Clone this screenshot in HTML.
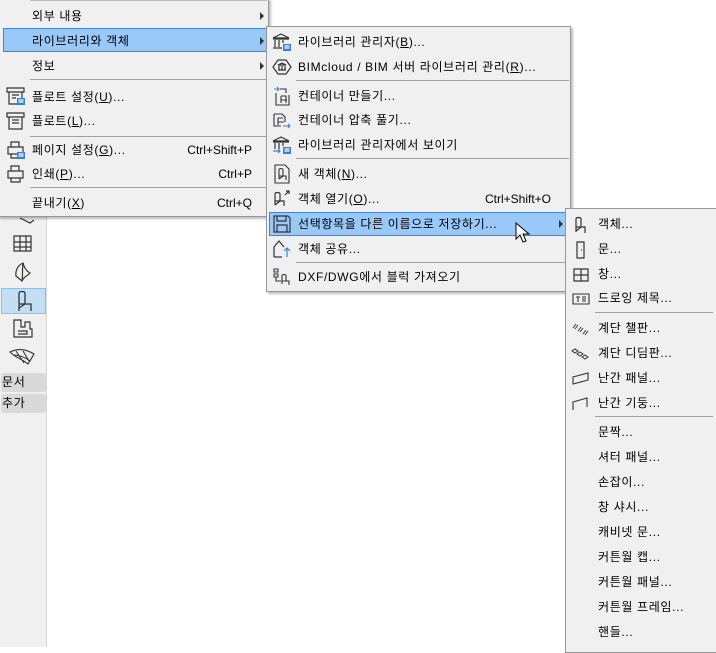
<!DOCTYPE html><html><head><meta charset="utf-8"><style>
*{margin:0;padding:0;box-sizing:border-box}
body{width:716px;height:647px;background:#fff;position:relative;overflow:hidden;font-family:"Liberation Sans","Noto Sans CJK KR",sans-serif;font-size:12px;color:#000}
.m{position:absolute;background:#f0f0f0;border:1px solid #979797;box-shadow:2px 2px 2px rgba(0,0,0,.25)}
.t{position:absolute;white-space:nowrap;line-height:16px;letter-spacing:0.65px}
.r{position:absolute;white-space:nowrap;line-height:16px;text-align:right}
.sep{position:absolute;height:1px;background:#a0a0a0}
.hl{position:absolute;background:#99c9f9;border:1px solid #3f86d2}
.arr{position:absolute;width:0;height:0;border-top:4px solid transparent;border-bottom:4px solid transparent;border-left:4px solid #333}
svg{position:absolute}
u{text-decoration:underline}
</style></head><body>
<!-- left toolbar -->
<div style="position:absolute;left:0;top:0;width:47px;height:647px;background:#f0f0f0;border-right:1px solid #d5d5d5"></div>
<svg style="left:14px;top:210px" width="22" height="16" viewBox="0 0 22 16" fill="none" stroke="#333" stroke-width="1.2"><path d="M6 8l10 5 4-3"/></svg>
<svg style="left:12px;top:234px" width="22" height="20" viewBox="0 0 22 20" fill="none" stroke="#333" stroke-width="1.2"><path d="M2 2h17v15H2z M2 8h17 M2 13h17 M8 2v15 M14 2v15"/></svg>
<svg style="left:13px;top:261px" width="20" height="22" viewBox="0 0 20 22" fill="none" stroke="#333" stroke-width="1.2"><path d="M10 2C5 4 2 10 3 15l6 5c2-5 7-6 8-8-4-2-6-6-7-10z M10 2c-1 6 0 13-1 18"/></svg>
<div style="position:absolute;left:1px;top:288px;width:45px;height:26px;background:#c4def4;border:1px solid #8cc0ee"></div>
<svg style="left:15px;top:289px" width="18" height="24" viewBox="0 0 18 24" fill="none" stroke="#333" stroke-width="1.3"><path d="M4 20V4c0-2 6-2 6 0v11 M4 15h12v7 M10 15l-6 4 M4 15v7"/></svg>
<svg style="left:12px;top:318px" width="22" height="22" viewBox="0 0 22 22" fill="none" stroke="#333" stroke-width="1.2"><path d="M2 2h7v7h4V4h5v7h2v8H2z M6 13h9v3H6"/></svg>
<svg style="left:8px;top:346px" width="30" height="22" viewBox="0 0 30 22" fill="none" stroke="#333" stroke-width="1.1"><path d="M2 6c8-4 16-3 24 2l-6 10C14 13 8 12 2 6z M8 5l8 12 M15 5l6 10 M5 9c7 0 13 3 17 6"/></svg>
<div style="position:absolute;left:1px;top:373px;width:45px;height:19px;background:#d9d9d9;border-radius:3px"></div>
<div class="t" style="left:2px;top:374px">문서</div>
<div style="position:absolute;left:1px;top:394px;width:45px;height:19px;background:#d9d9d9;border-radius:3px"></div>
<div class="t" style="left:2px;top:395px">추가</div>

<!-- menu 1 -->
<div class="m" style="left:-2px;top:-2px;width:271px;height:219px"></div>
<div class="sep" style="left:30px;top:0;width:237px;background:#bbb"></div>
<div class="t" style="left:32px;top:8px">외부 내용</div><div class="arr" style="left:260px;top:12px"></div>
<div class="hl" style="left:3px;top:28px;width:264px;height:24px"></div>
<div class="t" style="left:32px;top:33px">라이브러리와 객체</div><div class="arr" style="left:260px;top:37px"></div>
<div class="t" style="left:32px;top:58px">정보</div><div class="arr" style="left:260px;top:62px"></div>
<div class="sep" style="left:30px;top:79px;width:237px"></div>
<svg style="left:6px;top:86px" width="20" height="20" viewBox="0 0 20 20" fill="none" stroke="#333" stroke-width="1.2"><path d="M1 2h17v4H1z M3 6v12h8 M16 6v6 M6 9h7 M6 12h4"/><rect x="11" y="12" width="8" height="7" fill="#3a7fd5" stroke="none"/><path d="M12.5 14h5M12.5 16h5" stroke="#fff"/></svg>
<div class="t" style="left:32px;top:89px">플로트 설정(<u>U</u>)...</div>
<svg style="left:6px;top:111px" width="20" height="20" viewBox="0 0 20 20" fill="none" stroke="#333" stroke-width="1.2"><path d="M1 2h17v4H1z M3 6v12h13V6 M6 9h7 M6 12h7"/></svg>
<div class="t" style="left:32px;top:113px">플로트(<u>L</u>)...</div>
<div class="sep" style="left:30px;top:136px;width:237px"></div>
<svg style="left:6px;top:140px" width="20" height="20" viewBox="0 0 20 20" fill="none" stroke="#333" stroke-width="1.2"><path d="M5 7V2h8v5 M2 7h15v7H2z M5 14v4h6"/><rect x="11" y="12" width="8" height="7" fill="#3a7fd5" stroke="none"/><path d="M12.5 14h5M12.5 16h5" stroke="#fff"/></svg>
<div class="t" style="left:32px;top:142px">페이지 설정(<u>G</u>)...</div><div class="r" style="right:464px;top:142px">Ctrl+Shift+P</div>
<svg style="left:6px;top:164px" width="20" height="20" viewBox="0 0 20 20" fill="none" stroke="#333" stroke-width="1.2"><path d="M5 7V2h8v5 M2 7h15v7H2z M5 14v4h9v-4"/></svg>
<div class="t" style="left:32px;top:166px">인쇄(<u>P</u>)...</div><div class="r" style="right:464px;top:166px">Ctrl+P</div>
<div class="sep" style="left:30px;top:187px;width:237px"></div>
<div class="t" style="left:32px;top:195px">끝내기(<u>X</u>)</div><div class="r" style="right:464px;top:195px">Ctrl+Q</div>

<!-- menu 2 -->
<div class="m" style="left:266px;top:26px;width:305px;height:266px"></div>
<svg style="left:272px;top:32px" width="20" height="20" viewBox="0 0 20 20" fill="none" stroke="#333" stroke-width="1.2"><path d="M1 6l8-4 8 4z M1 7h16 M3 8v7 M7 8v7 M11 8v3 M1 16h9"/><rect x="11" y="12" width="8" height="7" fill="#3a7fd5" stroke="none"/><path d="M12.5 14h5M12.5 16h5" stroke="#fff"/></svg>
<div class="t" style="left:298px;top:34px">라이브러리 관리자(<u>B</u>)...</div>
<svg style="left:272px;top:57px" width="20" height="20" viewBox="0 0 20 20" fill="none" stroke="#333" stroke-width="1.2"><path d="M6 3h8l5 7-5 7H6l-5-7z M6 8l4-2 4 2z M7 9v4 M10 9v4 M13 9v4 M6 13h8"/></svg>
<div class="t" style="left:298px;top:59px">BIMcloud / BIM 서버 라이브러리 관리(<u>R</u>)...</div>
<div class="sep" style="left:296px;top:80px;width:273px"></div>
<svg style="left:272px;top:86px" width="20" height="20" viewBox="0 0 20 20" fill="none" stroke="#333" stroke-width="1.1"><path d="M2 3h5 M5 1l2 2-2 2" stroke="#3a7fd5"/><path d="M8 3h6v4 M4 7v12h13V9 M9 10v7 M9 10h5v7 M9 14h6"/></svg>
<div class="t" style="left:298px;top:88px">컨테이너 만들기...</div>
<svg style="left:272px;top:110px" width="20" height="20" viewBox="0 0 20 20" fill="none" stroke="#333" stroke-width="1.1"><path d="M2 4h8l3 3v5 M2 4v12h7 M6 8v7 M6 8h5 M6 12h6"/><path d="M11 16h7 M16 14l2 2-2 2" stroke="#3a7fd5"/></svg>
<div class="t" style="left:298px;top:112px">컨테이너 압축 풀기...</div>
<svg style="left:272px;top:135px" width="20" height="20" viewBox="0 0 20 20" fill="none" stroke="#333" stroke-width="1.2"><path d="M1 6l8-4 8 4z M1 7h16 M3 8v6 M7 8v6 M11 8v3"/><path d="M1 16h7 M6 14l2 2-2 2" stroke="#3a7fd5"/><rect x="11" y="12" width="8" height="7" fill="#3a7fd5" stroke="none"/><path d="M12.5 14h5M12.5 16h5" stroke="#fff"/></svg>
<div class="t" style="left:298px;top:137px">라이브러리 관리자에서 보이기</div>
<div class="sep" style="left:296px;top:158px;width:273px"></div>
<svg style="left:272px;top:164px" width="20" height="20" viewBox="0 0 20 20" fill="none" stroke="#333" stroke-width="1.1"><path d="M3 1h10l4 4v14H3z M7 15V6c0-2 4-2 4 0v6 M7 12h7v4 M11 12l-4 3"/></svg>
<div class="t" style="left:298px;top:166px">새 객체(<u>N</u>)...</div>
<svg style="left:272px;top:188px" width="20" height="20" viewBox="0 0 20 20" fill="none" stroke="#333" stroke-width="1.2"><path d="M3 17V6c0-2 5-2 5 0v7 M3 13h9v5 M8 13l-5 4"/><path d="M13 7l4-4 M14 3h3v3"/></svg>
<div class="t" style="left:298px;top:191px">객체 열기(<u>O</u>)...</div><div class="r" style="right:165px;top:191px">Ctrl+Shift+O</div>
<div class="hl" style="left:269px;top:212px;width:297px;height:24px"></div>
<svg style="left:272px;top:214px" width="20" height="20" viewBox="0 0 20 20" fill="none" stroke="#333" stroke-width="1.2"><path d="M2 2h14l2 2v14H2z M5 2v5h9V2 M5 18v-7h10v7"/></svg>
<div class="t" style="left:298px;top:216px">선택항목을 다른 이름으로 저장하기...</div><div class="arr" style="left:559px;top:220px"></div>
<svg style="left:515px;top:222px" width="16" height="22" viewBox="0 0 16 22"><path d="M1 1v16l4-4 3 7 3-1-3-7h6z" fill="#fff" stroke="#000" stroke-width="1"/></svg>
<svg style="left:272px;top:239px" width="20" height="20" viewBox="0 0 20 20" fill="none" stroke="#333" stroke-width="1.2"><path d="M2 18V8l5-6 5 6 M2 18h8"/><path d="M15 18V9 M12 12l3-3 3 3" stroke="#3a7fd5"/></svg>
<div class="t" style="left:298px;top:241px">객체 공유...</div>
<div class="sep" style="left:296px;top:262px;width:273px"></div>
<svg style="left:272px;top:267px" width="20" height="20" viewBox="0 0 20 20" fill="none" stroke="#333" stroke-width="1.1"><path d="M2 2h4v3H2z M2 7h4v3H2z M4 10v4h5 M10 17V9c0-2 4-2 4 0v5 M10 14h7v4"/></svg>
<div class="t" style="left:298px;top:269px">DXF/DWG에서 블럭 가져오기</div>

<!-- menu 3 -->
<div class="m" style="left:565px;top:208px;width:154px;height:445px"></div>
<svg style="left:572px;top:215px" width="18" height="20" viewBox="0 0 18 20" fill="none" stroke="#333" stroke-width="1.2"><path d="M4 17V4c0-2 5-2 5 0v8 M4 12h9v6 M9 12l-5 4"/></svg>
<div class="t" style="left:598px;top:216px">객체...</div>
<svg style="left:572px;top:240px" width="18" height="20" viewBox="0 0 18 20" fill="none" stroke="#333" stroke-width="1.2"><path d="M5 2h7v16H5z M9 10h1"/></svg>
<div class="t" style="left:598px;top:241px">문...</div>
<svg style="left:572px;top:265px" width="18" height="20" viewBox="0 0 18 20" fill="none" stroke="#333" stroke-width="1.2"><path d="M2 4h14v12H2z M2 10h14 M9 4v12"/></svg>
<div class="t" style="left:598px;top:266px">창...</div>
<svg style="left:571px;top:289px" width="20" height="20" viewBox="0 0 20 20" fill="none" stroke="#333" stroke-width="1.1"><path d="M2 5h16v10H2z M5 8h4 M7 8v5 M11 8h4 M11 10h4 M11 12h4"/></svg>
<div class="t" style="left:598px;top:290px">드로잉 제목...</div>
<div class="sep" style="left:595px;top:312px;width:118px"></div>
<svg style="left:571px;top:319px" width="20" height="20" viewBox="0 0 20 20" fill="none" stroke="#333" stroke-width="1"><path d="M2 9l3-4 M4 10l3-4 M7 12l3-4 M9 13l3-4 M12 15l3-4 M14 16l3-4"/></svg>
<div class="t" style="left:598px;top:320px">계단 챌판...</div>
<svg style="left:571px;top:344px" width="20" height="20" viewBox="0 0 20 20" fill="none" stroke="#333" stroke-width="1"><path d="M1 7l3-2 3 2-3 2z M6 10l3-2 3 2-3 2z M11 13l3-2 3 2-3 2z"/></svg>
<div class="t" style="left:598px;top:345px">계단 디딤판...</div>
<svg style="left:571px;top:369px" width="20" height="20" viewBox="0 0 20 20" fill="none" stroke="#333" stroke-width="1.1"><path d="M2 8l15-4v7L2 15z"/></svg>
<div class="t" style="left:598px;top:370px">난간 패널...</div>
<svg style="left:571px;top:394px" width="20" height="20" viewBox="0 0 20 20" fill="none" stroke="#333" stroke-width="1.1"><path d="M2 16V8l14-4v9"/></svg>
<div class="t" style="left:598px;top:395px">난간 기둥...</div>
<div class="sep" style="left:595px;top:416px;width:118px"></div>
<div class="t" style="left:598px;top:424px">문짝...</div>
<div class="t" style="left:598px;top:449px">셔터 패널...</div>
<div class="t" style="left:598px;top:474px">손잡이...</div>
<div class="t" style="left:598px;top:499px">창 샤시...</div>
<div class="t" style="left:598px;top:524px">캐비넷 문...</div>
<div class="t" style="left:598px;top:549px">커튼월 캡...</div>
<div class="t" style="left:598px;top:574px">커튼월 패널...</div>
<div class="t" style="left:598px;top:599px">커튼월 프레임...</div>
<div class="t" style="left:598px;top:624px">핸들...</div>
</body></html>
